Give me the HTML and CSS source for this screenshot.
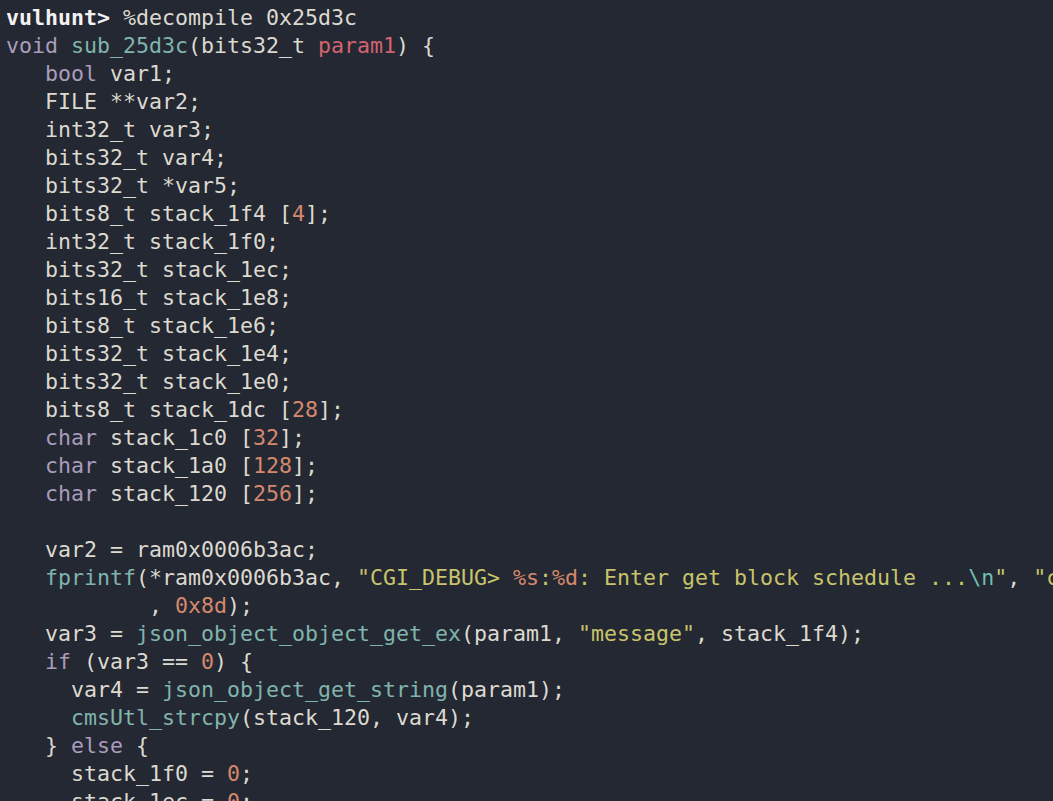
FILE: index.html
```html
<!DOCTYPE html>
<html>
<head>
<meta charset="utf-8">
<link rel="stylesheet" href="styles.css">
</head>
<body>
<pre class="term"><span class="prompt">vulhunt&gt;</span> %decompile 0x25d3c
<span class="kw">void</span> <span class="fn">sub_25d3c</span>(bits32_t <span class="param">param1</span>) {
   <span class="kw">bool</span> var1;
   FILE **var2;
   int32_t var3;
   bits32_t var4;
   bits32_t *var5;
   bits8_t stack_1f4 [<span class="num">4</span>];
   int32_t stack_1f0;
   bits32_t stack_1ec;
   bits16_t stack_1e8;
   bits8_t stack_1e6;
   bits32_t stack_1e4;
   bits32_t stack_1e0;
   bits8_t stack_1dc [<span class="num">28</span>];
   <span class="kw">char</span> stack_1c0 [<span class="num">32</span>];
   <span class="kw">char</span> stack_1a0 [<span class="num">128</span>];
   <span class="kw">char</span> stack_120 [<span class="num">256</span>];

   var2 = ram0x0006b3ac;
   <span class="fn">fprintf</span>(*ram0x0006b3ac, <span class="str">"CGI_DEBUG&gt; <span class="num">%s</span>:<span class="num">%d</span>: Enter get block schedule ...<span class="esc">\n</span>"</span>, <span class="str">"cgiGetBlockSchedule"</span>
           , <span class="num">0x8d</span>);
   var3 = <span class="fn">json_object_object_get_ex</span>(param1, <span class="str">"message"</span>, stack_1f4);
   <span class="kw">if</span> (var3 == <span class="num">0</span>) {
     var4 = <span class="fn">json_object_get_string</span>(param1);
     <span class="fn">cmsUtl_strcpy</span>(stack_120, var4);
   } <span class="kw">else</span> {
     stack_1f0 = <span class="num">0</span>;
     stack_1ec = <span class="num">0</span>;
</pre>
</body>
</html>
```
FILE: styles.css
```css
html, body {
  margin: 0;
  padding: 0;
  background: #242832;
  overflow: hidden;
  width: 1053px;
  height: 801px;
}
.term {
  margin: 0;
  padding: 4px 0 0 6px;
  font-family: "DejaVu Sans Mono", "Liberation Mono", monospace;
  font-size: 21.6px;
  line-height: 28px;
  color: #dcd9d0;
  white-space: pre;
  overflow: hidden;
}
.prompt { font-weight: bold; color: #f2f2f2; }
.kw { color: #a99cbc; }
.fn { color: #80b4ac; }
.param { color: #d3646f; }
.num { color: #d5896c; }
.str { color: #c8c46c; }
.esc { color: #6fbfae; }
```
